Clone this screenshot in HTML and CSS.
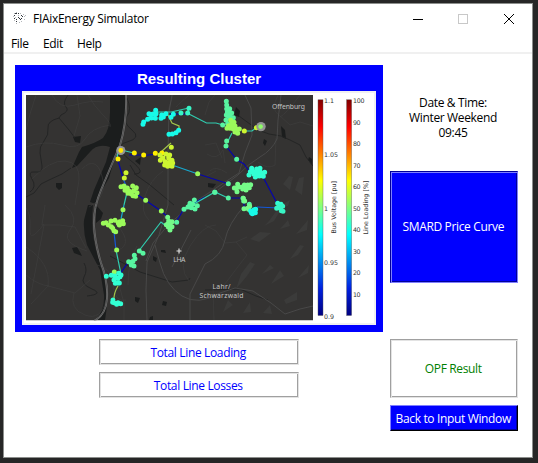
FILE: index.html
```html
<!DOCTYPE html>
<html lang="en">
<head>
<meta charset="utf-8">
<title>FIAixEnergy Simulator</title>
<link rel="stylesheet" href="styles.css">
</head>
<body>
<div class="window">
  <header class="titlebar">
    <svg class="app-icon" viewBox="0 0 14 13" width="14" height="13">
      <path class="ink-light" d="M1 1h1v1H1zM3 0h1v1H3zM0 4h1v1H0zM7 1h1v1H7zM1 8h1v1H1zM3 11h1v1H3zM6 10h1v1H6zM10 2h1v1h-1zM12 3h1v1h-1zM11 7h1v1h-1zM5 3h1v1H5zM2 5h1v1H2zM8 9h1v1H8zM11 4h1v1h-1z"/>
      <path class="ink-dark" d="M2 1h2v1H2zM5 1h1v1H5zM1 3h1v1H1zM1 6h1v1H1zM3 7h1v1H3zM5 5h1v1H5zM6 6h1v1H6zM8 6h1v1H8zM9 4h1v1H9zM7 7h1v1H7zM3 9h1v1H3zM8 3h1v1H8z"/>
    </svg>
    <h1 class="title">FIAixEnergy Simulator</h1>
    <svg class="controls" viewBox="0 0 110 12" width="110" height="12">
      <path class="minimize" d="M3 6.500h10"/>
      <rect class="maximize" x="48.500" y="1.500" width="9" height="9"/>
      <path class="close" d="M94 1l10 10M104 1L94 11"/>
    </svg>
  </header>
  <nav class="menubar"><span class="menu-file">File</span><span class="menu-edit">Edit</span><span class="menu-help">Help</span></nav>
  <main class="content">
    <section class="left">
      <div class="cluster">
        <h2 class="cluster-title">Resulting Cluster</h2>
        <svg class="figure" viewBox="22 91 354 234" width="354" height="234">
          <defs>
            <linearGradient id="jet" x1="0" y1="0" x2="0" y2="1">
              <stop offset="0" stop-color="#800000"/><stop offset=".125" stop-color="#f00"/>
              <stop offset=".375" stop-color="#ff0"/><stop offset=".625" stop-color="#0ff"/>
              <stop offset=".875" stop-color="#0020e0"/><stop offset="1" stop-color="#000080"/>
            </linearGradient>
            <clipPath id="map-area"><rect x="26" y="95" width="287" height="225.3"/></clipPath>
          </defs>
          <rect class="mat" x="22" y="91" width="354" height="234"/>
          <rect class="paper" x="24" y="93" width="350" height="230"/>
          <g clip-path="url(#map-area)">
            <rect class="land" x="26" y="95" width="287" height="226"/>
            <!-- rivers and lakes -->
            <path class="water" d="M110 95H126L125 119Q124 135 118 147L109 178 102 190 96 204 90 202 94 190 106 162 110 147Q97 143 90 152L77 166 72 168 79 152 82 147Q96 143 103 138 110 130 110 112zM73 137l8-1-1 7-5-1zM56 183h6v5l-3 2-3-3zM72 248l5-1 3 5 2 4-8-3zM88 205L84 220Q83 232 87 245L100 270 104 295Q105 309 96 320H105Q109 300 104 278L99 260Q90 235 93 205zM135 161l6-4-1 8zM236 107l4 4-1 6-5-2zM281 126l4 4 1 9-4-2zM264 139l3 2-2 5-2-3zM208 183l8 1-3 4-5-1zM309 157l3 2v6l-4-5zM135 297l5 1-2 5-3-2zM163 301l4 1-1 4-4-1zM150 317l3-1v4h-4zM161 250l4 0 1 3-5-1zM153 256l4 2-1 4-3-2zM96 205l7 8-2 6-5 4z"/>
            <g class="stream">
              <path d="M68 95Q62 103 66 107T61 115L59 118Q47 121 48 128T44 141 40 153 42 166 35 172 32 179 30 192M59 118L69 130 75 138M71 168L62 174 49 180 41 184 34 193 26 197M84 263Q88 270 84 277T92 289 87 296"/>
              <path d="M239 116L258 130 269 134 281 136 290 140 300 145 306 157 313 166M110 256L140 272 172 282 189 280 190 278M205 290L240 289 256 296 268 300M127 98Q132 110 127 116T132 130 127 142 130 160 134 174M130 165L136 175 150 185 174 205"/>
            </g>
            <g class="lane">
              <path d="M36 95L30 114 26 130M26 147Q45 140 62 145T85 139 110 125M52 95Q60 110 75 105T103 102M77 95L80 116 74 136M45 205L42 225Q60 224 75 227L86 248M26 247Q51 263 48 286L31 304M48 286L75 293 90 280M44 225L31 294M26 275Q38 285 49 286M88 95Q94 106 103 115T110 127M32 179Q50 160 65 161T79 180L75 205M26 208Q31 214 30 229T44 224M65 205Q80 218 70 230T87 251M74 293Q69 309 85 315T106 300M82 169Q96 155 102 176T89 207"/>
              <path d="M106 225Q118 221 124 235T111 252M97 265Q111 267 113 285T126 300M173 95Q170 104 168 112M163 171Q150 180 145 196T149 220M205 225L216 231 225 243 236 242 247 237M236 242L247 255 240 264 231 276 224 285M216 171L205 177M215 95L209 102 205 115M227 173Q215 165 210 171M276 138L275 165Q268 170 258 162M278 95Q270 110 279 115L290 125 300 122 313 126M189 95Q180 103 176 107"/>
              <path d="M119 285L124 303 124 320M128 285Q128 260 137 246M216 225Q203 225 190 246T189 281M213 288L214 320M207 154Q217 161 223 150L225 163M205 145L216 143 222 158M300 95Q285 115 280 117"/>
            </g>
            <g class="road">
              <path d="M172 95L169 112 168 150 168 205 159 235 147 262 146 290 147 320"/>
              <path d="M245 95L251 108 252 135 245 153 239 173 222 184 195 202 169 224 153 243 146 261M281 95L278 120 277 139Q272 150 260 157T238 175L218 190"/>
              <path d="M155 245L160 263Q166 286 182 296T220 293L235 288 253 291 271 303 285 314 300 309 313 306M172 267L191 230M245 205Q228 224 225 240T205 264L190 294 190 320"/>
            </g>
            <g class="hill"><path d="M277 210l-8 11-5 5 10-5 6-10zM260 232l-10 7 9 3 12-9zM289 176l-6 8 7 6 3-13zM299 178l-4 12 7 5 2-18zM288 220l-8 9 10-3zM300 245l-10 14 8-4 6-9zM250 262l-9 12-5 15 11-13 8-12zM297 292l-13 8 2 4 11-4zM270 265l-8 9 12-6zM309 265l-11 13 10-5zM228 300l-5 12 10-7zM250 302l-7 11 8-1zM280 270l-9 14 13-8zM270 305l-7 8 9 1zM308 220l-12 14 11-4zM290 200l-14 8 12-2z"/></g>
            <path class="rail-shadow" d="M126 95Q127 122 120 145L101 190Q93 209 94 226T101 263Q108 281 107 298T94 321"/>
            <path class="rail" d="M126 95Q127 122 120 145L101 190Q93 209 94 226T101 263Q108 281 107 298T94 321"/>

            <!-- network lines -->
            <g class="net">
              <path class="navy" d="M117.500 159L123 178M129 155h15M144 155.500l9-1M198 174L229 184M226 146L237 160 244 164 249 171M263 177L279 207M228 198h16M138 195L161 211M161 211l8 7M176 222L184 209 194 205M192 204L205 197M120 274L129 261M170 114h17M244 198v9"/>
              <path class="blue" d="M114 232L116 250M123 178l3 8M257 207L279 208"/>
              <path class="teal" d="M121 150l13 3M187 113L206.500 123H216L223 125M138 252L161 222 166 226M116 250l5 24M194 204L215 192 228 198M128 188L124 205M232 133L227 143M244 131h8l5-4M143 124l10-12h18l18-4M118 151l-1 8"/>
              <path class="sky" d="M172 165L198 174M124 205L121 219"/>
              <path class="lime" d="M118 286Q113 294 114 303M168 115L172 123 179 126v5l-4 3M162 151l9-8"/>
            </g>
            <!-- network buses -->
            <g class="nodes" transform="translate(110 85) scale(.333333)">
              <path class="cyan" d="M137 76h0M117 86h0M127 88h0M138 86h0M101 111h0M99 118h0M113 103h0M124 99h0M136 100h0M155 90h0M168 86h0M153 100h0M160 96h0M183 97h0M190 88h0M177 148h0M187 147h0M198 143h0M206 136h0"/>
              <path class="aqua" d="M213 84h0M233 84h0M237 70h0M315 322h0"/>
              <path class="yellow" d="M32 196h0M24 222h0M73 204h0M101 210h0M136 205h0M156 204h0"/>
              <path class="gold-green" d="M150 210h0M168 207h0M179 210h0M176 218h0M159 219h0M151 226h0M166 230h0M176 233h0M186 226h0M164 240h0M173 244h0M186 244h0M180 227h0M188 234h0M184 187h0M48 263h0M43 279h0"/>
              <path class="green" d="M33 305h0M42 303h0M52 309h0M68 303h0M79 308h0M45 316h0M57 318h0M71 317h0M81 323h0M64 327h0M77 334h0M54 325h0M69 332h0M107 346h0M263 266h0"/>
            </g>
            <g class="nodes" transform="translate(205 85) scale(.333333)">
              <path class="mint" d="M64 49h0M65 60h0M65 71h0M74 71h0M67 82h0M73 79h0M64 90h0M71 92h0M80 84h0M76 98h0M85 98h0M63 105h0M53 120h0M68 116h0M63 183h0M65 168h0M95 223h0M70 296h0M29 322h0M70 339h0M114 340h0M116 348h0M133 358h0"/>
              <path class="green" d="M77 106h0M87 112h0M71 122h0M79 119h0M90 123h0M66 130h0M75 130h0M85 132h0M94 132h0M103 132h0M90 141h0M98 145h0M81 113h0M82 124h0M167 125h0"/>
              <path class="gold-green" d="M118 138h0M154 128h0"/>
              <path class="turquoise" d="M140 250h0M136 260h0M132 270h0M147 268h0M155 252h0M164 255h0M158 264h0M163 273h0M172 265h0M179 262h0M175 274h0M146 260h0M151 276h0M165 250h0M218 355h0M228 358h0"/>
              <path class="mint-green" d="M98 298h0M88 309h0M99 307h0M96 320h0M109 307h0M118 300h0M128 300h0M137 299h0M133 308h0M123 315h0M113 312h0M127 306h0"/>
            </g>
            <g class="nodes" transform="translate(110 205) scale(.333333)">
              <path class="green" d="M39 14h0M3 48h0M15 46h0M25 55h0M38 47h0M40 56h0M29 50h0M4 65h0M12 77h0M17 80h0M8 70h0M-12 53h0M-20 55h0M-5 60h0M20 135h0M154 18h0M13 201h0M28 60h0"/>
              <path class="mint-green" d="M173 37h0M176 48h0M169 59h0M181 58h0M186 50h0M175 66h0M186 65h0M180 75h0"/>
              <path class="mint" d="M200 52h0M222 13h0M234 6h0M244 8h0M255 12h0M262 2h0M248 -2h0M239 0h0M253 -15h0M240 -5h0M88 138h0M99 145h0M73 151h0M75 161h0M69 169h0M56 170h0M72 183h0M64 180h0"/>
              <path class="turquoise" d="M-11 214h0M4 211h0M14 213h0M26 205h0M33 210h0M24 220h0M12 225h0M22 234h0M16 235h0M28 234h0M30 215h0M9 285h0M12 293h0M20 298h0M32 296h0M24 293h0M8 292h0"/>
            </g>
            <g class="nodes" transform="translate(205 205) scale(.333333)">
              <path class="mint-green" d="M117 11h0M128 10h0M134 4h0M115 -20h0M119 -12h0M131 13h0"/>
              <path class="cyan" d="M137 18h0M147 14h0M152 13h0M142 26h0M151 23h0M139 24h0"/>
              <path class="aqua" d="M215 10h0M222 3h0M233 4h0M227 10h0M234 19h0M229 17h0"/>
            </g>
            <circle class="halo" cx="120.800" cy="150.500" r="4.600"/><circle class="source-yellow" cx="120.800" cy="150.500" r="2.400"/>
            <circle class="halo" cx="261" cy="126.600" r="4.700"/><circle class="source-green" cx="260.600" cy="126.600" r="2.300"/>
            <path class="airport" d="M179 248.500v5M176.500 251h5"/>
            <g class="place">
              <text x="272" y="109" textLength="33">Offenburg</text>
              <text x="173.300" y="262" textLength="12">LHA</text>
              <text x="212.500" y="288.500" textLength="18">Lahr/</text>
              <text x="199.500" y="298" textLength="44">Schwarzwald</text>
            </g>
          </g>
          <rect class="scale" x="318" y="99.800" width="5" height="215.700"/>
          <rect class="scale" x="346.600" y="99.800" width="5" height="215.700"/>
          <g class="ticks">
            <text x="324" y="103" textLength="10">1.1</text>
            <text x="324" y="157" textLength="14">1.05</text>
            <text x="324" y="211">1</text>
            <text x="324" y="264.700" textLength="14">0.95</text>
            <text x="324" y="318.500" textLength="10">0.9</text>
            <text x="353" y="103" textLength="11.500">100</text>
            <text x="353" y="124.500" textLength="7.500">90</text>
            <text x="353" y="146" textLength="7.500">80</text>
            <text x="353" y="167.500" textLength="7.500">70</text>
            <text x="353" y="189" textLength="7.500">60</text>
            <text x="353" y="210.700" textLength="7.500">50</text>
            <text x="353" y="232" textLength="7.500">40</text>
            <text x="353" y="253.500" textLength="7.500">30</text>
            <text x="353" y="275" textLength="7.500">20</text>
            <text x="353" y="296.700" textLength="7.500">10</text>
            <text transform="translate(335.600 233.500) rotate(-90)" textLength="52.500">Bus Voltage [pu]</text>
            <text transform="translate(367.600 234.500) rotate(-90)" textLength="54">Line Loading [%]</text>
          </g>
        </svg>
      </div>
      <div class="totals">
        <button class="btn plain link">Total Line Loading</button>
        <button class="btn plain link">Total Line Losses</button>
      </div>
    </section>
    <aside class="right">
      <p class="datetime">Date &amp; Time:<br>Winter Weekend<br>09:45</p>
      <button class="btn price">SMARD Price Curve</button>
      <button class="btn plain opf">OPF Result</button>
      <button class="btn back">Back to Input Window</button>
    </aside>
  </main>
</div>
</body>
</html>
```
FILE: styles.css
```css
* { box-sizing: border-box; }
body {
  margin: 0;
  height: 463px;
  padding: 3px 5px 5px 3px;
  background: #262626;
  font: 12px/15px "Open Sans", "Noto Sans", sans-serif;
  letter-spacing: -0.35px;
  color: #000;
  overflow: hidden;
}
.window { width: 530px; height: 455px; background: #fff; border: 1px solid #8c8e8c; }
.titlebar { display: flex; align-items: center; height: 29px; padding-left: 9px; }
.app-icon { margin-right: 6px; }
.ink-light { fill: #b5b8bc; }
.ink-dark { fill: #30343a; }
.title { margin: 0; font-size: 12px; font-weight: 400; letter-spacing: -0.3px; }
.controls { margin-left: auto; margin-right: 12px; }
.controls * { fill: none; stroke: #000; }
.controls .maximize { stroke: #c8c8c8; }
.menubar { display: flex; height: 21px; padding: 3px 0 0 7px; border-bottom: 2px solid #f0f0f0; }
.menubar .menu-file { width: 32px; }
.menubar .menu-edit { width: 34px; }
.content { display: flex; gap: 7px; padding: 11px 0 0 11px; }
.left { width: 368px; }
.cluster { height: 267px; padding: 0 7px; background: #00f; }
.cluster-title {
  height: 26px; margin: 0; text-align: center; color: #fff;
  font: bold 15px/28px "Liberation Sans", Arial, sans-serif; letter-spacing: 0;
}
.figure { display: block; letter-spacing: 0; }
.totals { display: flex; flex-direction: column; gap: 7px; width: 200px; margin: 7px 0 0 84px; }
.right { display: flex; flex-direction: column; width: 128px; }
.datetime { height: 106px; margin: 0; padding: 30px 2px 0 0; text-align: center; }
.btn { height: 26px; padding: 0 1.5px 0 0; font: inherit; letter-spacing: inherit; border: 1px solid; white-space: nowrap; }
.plain { background: #fff; border-color: #a0a0a0 #e3e3e3 #e3e3e3 #a0a0a0; box-shadow: inset 1px 1px #e3e3e3, inset -1px -1px #a0a0a0; }
.link { color: #00f; }
.price { height: 112px; padding-bottom: 1px; background: #00f; color: #fff; border-color: #000099 #7f7fff #7f7fff #000099; box-shadow: inset 1px 1px #7f7fff, inset -1px -1px #000099; }
.opf { height: 59px; margin-top: 56px; color: #008000; }
.back { margin-top: 7px; background: #00f; color: #fff; border-color: #7f7fff #000 #000 #7f7fff; box-shadow: inset -1px -1px #000099; }

.mat { fill: #f0f0f2; }
.paper { fill: #fff; }
.land { fill: #343332; }
.water { fill: #1b1d1d; }
.stream, .lane, .road { fill: none; }
.stream { stroke: #232424; stroke-width: .9; }
.lane { stroke: #424343; stroke-width: .5; }
.road { stroke: #4b4b4b; stroke-width: .9; }
.hill { fill: #3b3b3a; }
.rail-shadow { fill: none; stroke: #777; stroke-width: 1.9; }
.rail { fill: none; stroke: #353535; stroke-width: .6; }
.net { fill: none; stroke-width: 1.2; }
.navy { stroke: #0505ad; }
.blue { stroke: #1458d8; }
.teal { stroke: #30cdb0; }
.sky { stroke: #17a9cf; }
.lime { stroke: #a3c64b; }
.nodes { fill: none; stroke-width: 15; stroke-linecap: round; }
.cyan { stroke: #17fae8; }
.aqua { stroke: #38f5c5; }
.turquoise { stroke: #32ffd3; }
.mint { stroke: #58f5a0; }
.mint-green { stroke: #75fa88; }
.green { stroke: #9bfa5a; }
.gold-green { stroke: #cdf530; }
.yellow { stroke: #ffef00; }
.halo { fill: #949494; }
.source-yellow { fill: #ffe600; }
.source-green { fill: #8dfb69; }
.airport { stroke: #ddd; stroke-width: 1.2; }
.place { fill: #c4c4c4; font: 6.8px "Noto Sans", sans-serif; }
.scale { fill: url(#jet); stroke: #555; stroke-width: .4; }
.ticks { fill: #333; font: 6.3px "DejaVu Sans", sans-serif; }
```
